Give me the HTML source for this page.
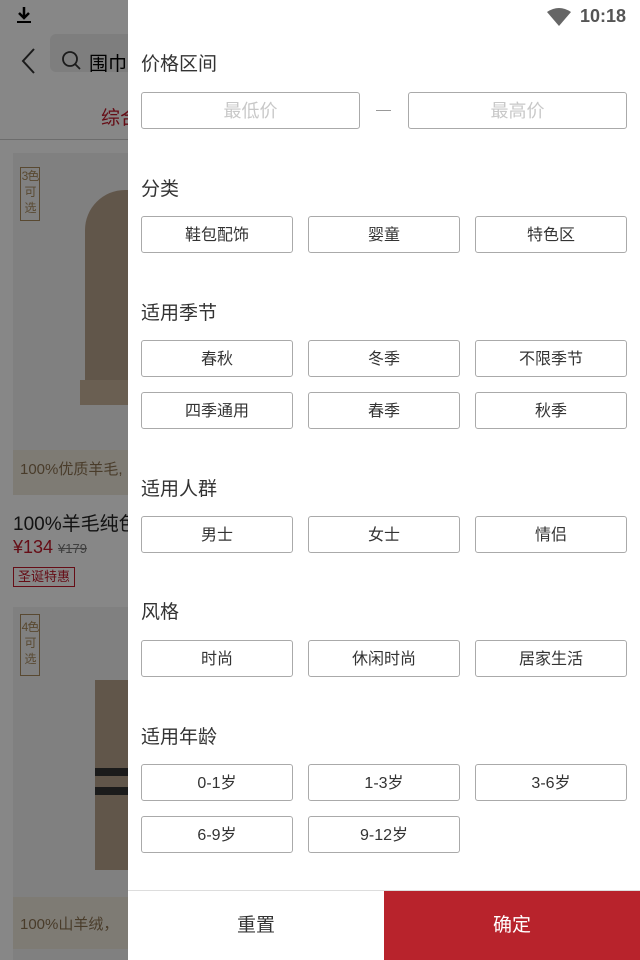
<!DOCTYPE html>
<html><head><meta charset="utf-8"><style>
*{margin:0;padding:0;box-sizing:border-box}
body{width:640px;height:960px;position:relative;overflow:hidden;font-family:"Liberation Sans","Noto Sans CJK SC",sans-serif;background:#fff}
.abs{position:absolute}
.ov{position:absolute;left:0;top:0;width:640px;height:960px;background:rgba(0,0,0,0.47)}
.panel{position:absolute;left:128px;top:0;width:512px;height:960px;background:#fff}
.t{position:absolute;left:13px;font-size:19px;color:#333}
.b{position:absolute;width:152px;height:37px;border:1px solid #aaa;border-radius:3px;font-size:16px;color:#333;text-align:center;line-height:37px}
.in{position:absolute;height:37px;border:1px solid #aaa;border-radius:3px;font-size:18px;color:#c8c8c8;text-align:center;line-height:37px}
.bd{position:absolute;left:20px;width:20px;border:1px solid #a88a5e;font-size:12px;color:#a88a5e;text-align:center;line-height:16px;letter-spacing:-1px}
</style></head><body>
<div class="abs" style="left:16px;top:6px;width:16px;height:18px">
<svg width="16" height="18"><path d="M8 1v10M3 7l5 5 5-5" stroke="#000" stroke-width="2.5" fill="none"/><rect x="1" y="15" width="14" height="2" fill="#000"/></svg></div>
<svg class="abs" style="left:18px;top:46px" width="20" height="30"><path d="M16 3L5 15l11 12" stroke="#333" stroke-width="2" fill="none"/></svg>
<div class="abs" style="left:50px;top:34px;width:100px;height:38px;background:#eee;border-radius:6px"></div>
<svg class="abs" style="left:61px;top:50px" width="24" height="24"><circle cx="9" cy="9" r="7" stroke="#333" stroke-width="1.8" fill="none"/><path d="M14 14l5 5" stroke="#333" stroke-width="1.8"/></svg>
<div class="abs" style="left:89px;top:49px;font-size:19px;color:#000">围巾</div>
<div class="abs" style="left:101px;top:103px;font-size:19px;color:#c0192a">综合</div>
<div class="abs" style="left:0;top:139px;width:128px;height:1px;background:#ccc"></div>
<div class="abs" style="left:13px;top:153px;width:120px;height:342px;background:#f2f2f2"></div>
<div class="abs" style="left:85px;top:190px;width:50px;height:200px;background:#b8a28c;border-radius:40px 0 0 0"></div>
<div class="abs" style="left:80px;top:380px;width:55px;height:25px;background:#c8b49c"></div>
<div class="abs" style="left:13px;top:450px;width:120px;height:45px;background:#efe8dc"></div>
<div class="abs" style="left:20px;top:458px;font-size:15px;color:#8a7150;white-space:nowrap">100%优质羊毛,</div>
<div class="bd" style="top:139px;top:167px;height:54px">3色可选</div>
<div class="abs" style="left:13px;top:509px;font-size:19px;color:#222;white-space:nowrap">100%羊毛纯色</div>
<div class="abs" style="left:13px;top:537px;font-size:18px;color:#c0192a">¥134 <span style="font-size:13px;color:#777;text-decoration:line-through">¥179</span></div>
<div class="abs" style="left:13px;top:567px;width:62px;height:20px;border:1px solid #c0192a;font-size:13px;color:#c0192a;text-align:center;line-height:18px">圣诞特惠</div>
<div class="abs" style="left:13px;top:607px;width:120px;height:353px;background:#f2f2f2"></div>
<div class="abs" style="left:95px;top:680px;width:40px;height:190px;background:#b8a28c"></div>
<div class="abs" style="left:95px;top:768px;width:40px;height:8px;background:#333"></div>
<div class="abs" style="left:95px;top:787px;width:40px;height:8px;background:#333"></div>
<div class="abs" style="left:13px;top:897px;width:120px;height:52px;background:#efe8dc"></div>
<div class="abs" style="left:20px;top:913px;font-size:15px;color:#8a7150;white-space:nowrap">100%山羊绒，</div>
<div class="bd" style="top:614px;height:62px;padding-top:4px">4色可选</div>
<div class="ov"></div>
<div class="panel">
<svg class="abs" style="left:419px;top:8px" width="24" height="18"><path d="M0 4Q12-4 24 4L12 18Z" fill="#666"/></svg>
<div class="abs" style="left:452px;top:6px;font-size:18px;color:#555;font-weight:bold">10:18</div>
<div class="t" style="top:49px">价格区间</div>
<div class="in" style="left:13px;top:92px;width:219px">最低价</div>
<div class="abs" style="left:248px;top:110px;width:15px;height:1px;background:#999"></div>
<div class="in" style="left:280px;top:92px;width:219px">最高价</div>
<div class="t" style="top:174px">分类</div>
<div class="b" style="left:13px;top:216px">鞋包配饰</div><div class="b" style="left:180px;top:216px">婴童</div><div class="b" style="left:347px;top:216px">特色区</div>
<div class="t" style="top:298px">适用季节</div>
<div class="b" style="left:13px;top:340px">春秋</div><div class="b" style="left:180px;top:340px">冬季</div><div class="b" style="left:347px;top:340px">不限季节</div>
<div class="b" style="left:13px;top:392px">四季通用</div><div class="b" style="left:180px;top:392px">春季</div><div class="b" style="left:347px;top:392px">秋季</div>
<div class="t" style="top:474px">适用人群</div>
<div class="b" style="left:13px;top:516px">男士</div><div class="b" style="left:180px;top:516px">女士</div><div class="b" style="left:347px;top:516px">情侣</div>
<div class="t" style="top:597px">风格</div>
<div class="b" style="left:13px;top:640px">时尚</div><div class="b" style="left:180px;top:640px">休闲时尚</div><div class="b" style="left:347px;top:640px">居家生活</div>
<div class="t" style="top:722px">适用年龄</div>
<div class="b" style="left:13px;top:764px">0-1岁</div><div class="b" style="left:180px;top:764px">1-3岁</div><div class="b" style="left:347px;top:764px">3-6岁</div>
<div class="b" style="left:13px;top:816px">6-9岁</div><div class="b" style="left:180px;top:816px">9-12岁</div>
<div class="abs" style="left:0;top:890px;width:512px;height:1px;background:#ddd"></div>
<div class="abs" style="left:0;top:891px;width:256px;height:69px;font-size:19px;color:#333;text-align:center;line-height:69px">重置</div>
<div class="abs" style="left:256px;top:891px;width:256px;height:69px;background:#b8232c;font-size:19px;color:#fff;text-align:center;line-height:69px">确定</div>
</div>
</body></html>
